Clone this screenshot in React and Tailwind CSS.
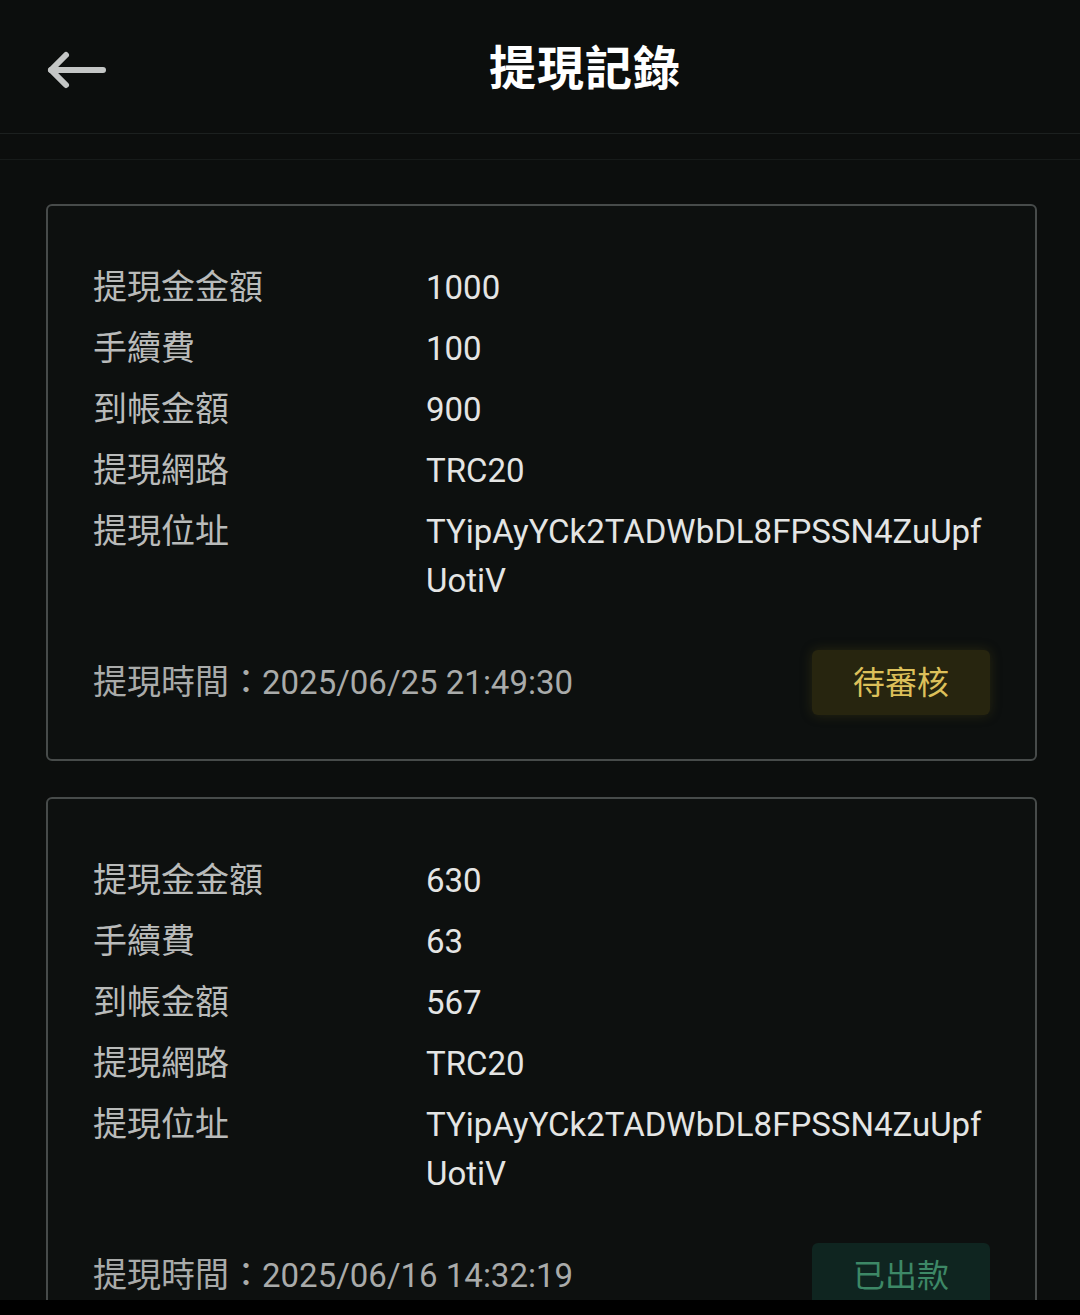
const records = [
  {
    amount: "1000",
    fee: "100",
    received: "900",
    network: "TRC20",
    address: ["TYipAyYCk2TADWbDL8FPSSN4ZuUpf", "UotiV"],
    time: "2025/06/25 21:49:30",
    status: "pending",
  },
  {
    amount: "630",
    fee: "63",
    received: "567",
    network: "TRC20",
    address: ["TYipAyYCk2TADWbDL8FPSSN4ZuUpf", "UotiV"],
    time: "2025/06/16 14:32:19",
    status: "paid",
  },
];

const font = {
  fontFamily: 'Roboto, "Noto Sans CJK TC", "Noto Sans", sans-serif',
};

function Row({ label, children }) {
  return (
    <div className="flex">
      <div className="w-[333px] shrink-0 text-[34px] leading-[49px] text-[#b9bbba]">{label}</div>
      <div className="text-[33px] leading-[49px] text-[#e4e5e4]">{children}</div>
    </div>
  );
}

function StatusBadge({ status }) {
  if (status === "pending") {
    return (
      <div className="w-[178px] h-[65px] rounded-md bg-[#27250f] flex items-center justify-center text-[32px] text-[#dcc05a] shadow-[0_0_12px_rgba(90,80,20,0.35)]">
        待審核
      </div>
    );
  }
  return (
    <div className="w-[178px] h-[65px] rounded-md bg-[#0f2520] flex items-center justify-center text-[32px] text-[#3d8866]">
      已出款
    </div>
  );
}

function RecordCard({ r }) {
  return (
    <div className="border-2 border-[#474b4a] rounded-md bg-[#0d100f] pt-[57px] pb-[44px] pl-[45px] pr-[45px]">
      <div className="flex flex-col gap-[12px]">
        <Row label="提現金金額">{r.amount}</Row>
        <Row label="手續費">{r.fee}</Row>
        <Row label="到帳金額">{r.received}</Row>
        <Row label="提現網路">{r.network}</Row>
        <Row label="提現位址">
          {r.address[0]}
          <br />
          {r.address[1]}
        </Row>
      </div>
      <div className="mt-[45px] flex items-center justify-between">
        <div className="flex items-center text-[#a9abaa]">
          <span className="text-[34px]">提現時間：</span>
          <span className="text-[33px] -ml-[1px]">{r.time}</span>
        </div>
        <StatusBadge status={r.status} />
      </div>
    </div>
  );
}

export default function App() {
  return (
    <div className="h-[1315px] flex flex-col bg-[#0c0e0d] overflow-hidden" style={font}>
      <div className="flex-1 overflow-hidden">
        <div className="h-[134px] flex items-center border-b border-[#1c201f]">
          <button className="ml-[46px] w-[60px] h-[40px] mt-[6px] flex items-center text-[#c4c6c5]">
            <svg width="60" height="40" viewBox="0 0 60 40" fill="none" stroke="currentColor" strokeWidth="6" strokeLinecap="round" strokeLinejoin="round">
              <path d="M57 20H5" />
              <path d="M20 5L5 20l15 15" />
            </svg>
          </button>
          <h1 className="flex-1 text-center pl-[30px] mt-[6px] text-[47px] font-bold text-white tracking-[1px]">
            提現記錄
          </h1>
          <div className="w-[46px]" />
        </div>
        <div className="h-[26px] border-b border-[#171b1a]" />
        <div className="pl-[46px] pr-[43px] pt-[44px] flex flex-col gap-[36px]">
          {records.map((r, i) => (
            <RecordCard key={i} r={r} />
          ))}
        </div>
      </div>
      <div className="h-[15px] bg-black" />
    </div>
  );
}
